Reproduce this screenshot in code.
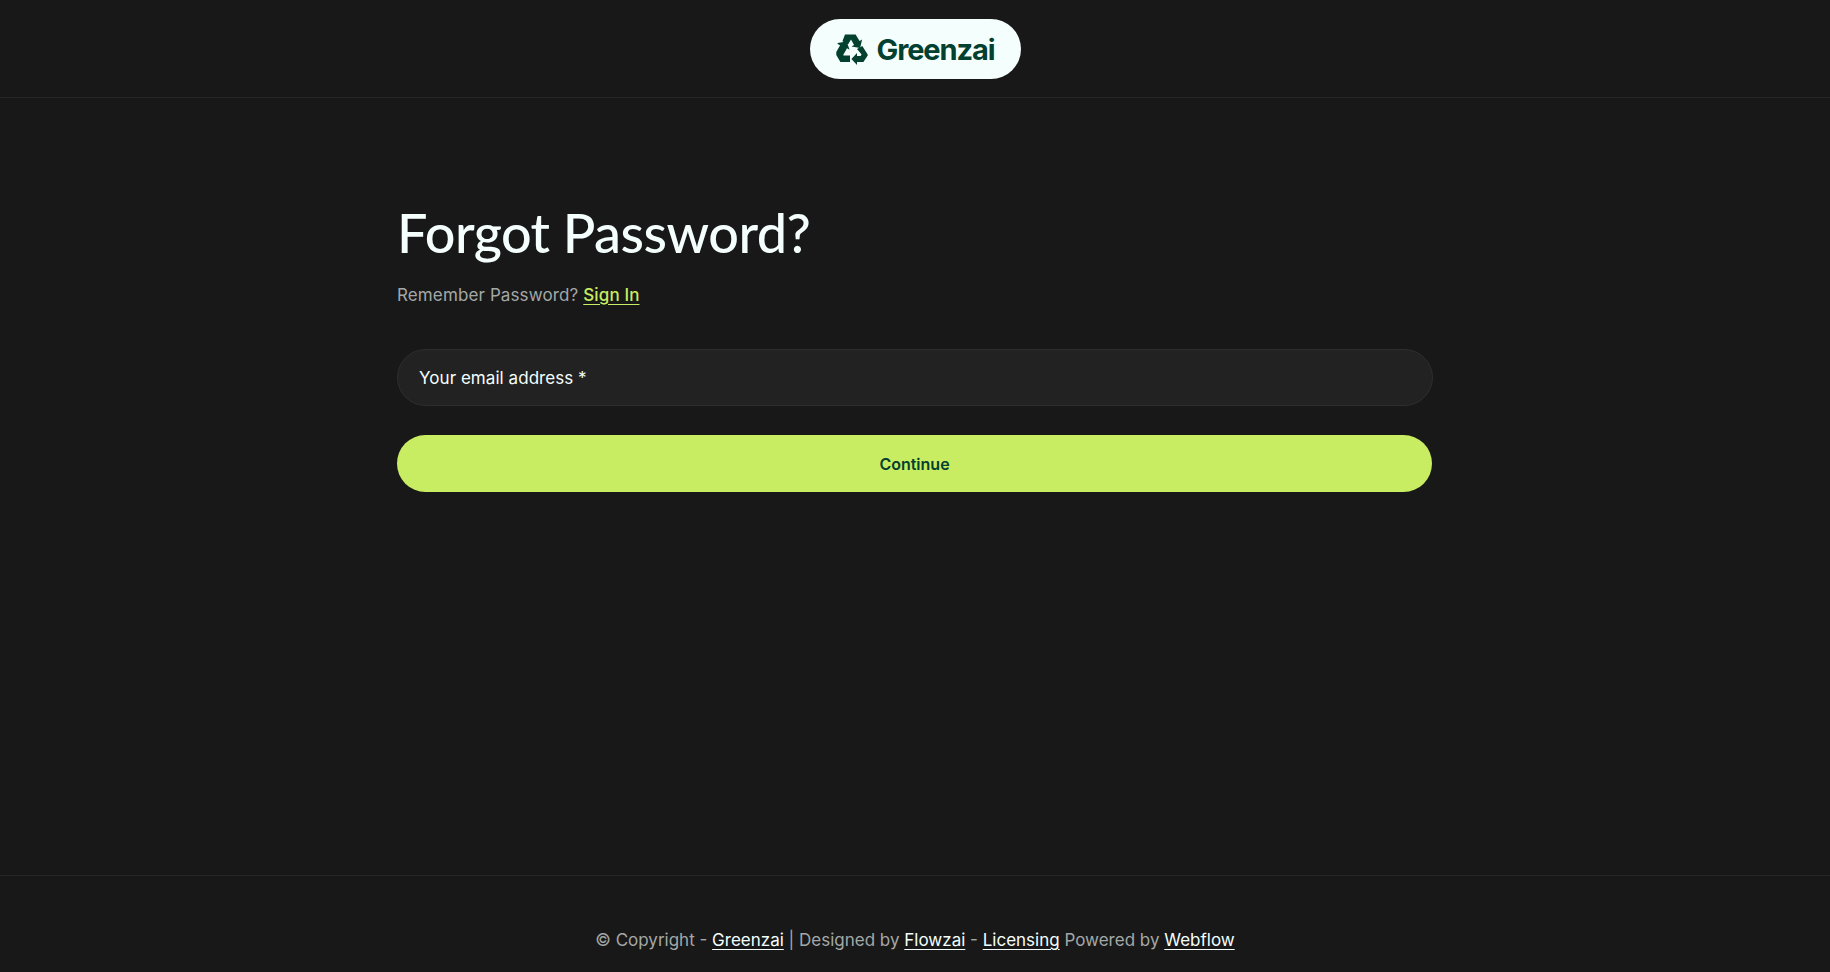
<script>
  const footerParts = ['Greenzai', 'Flowzai', 'Licensing', 'Webflow'];
</script>

<div class="page">
  <header class="top">
    <a class="logo" href="#home">
      <svg class="mark" viewBox="0 0 32 31" aria-hidden="true">
        <path d="M9 .6h10.6l4 6.4 2.5-1.5-2 8.4-8.6-1.4 2.6-1.5L15 5.6l-3 5-5.6-3.3z" />
        <path d="M1.6 9l9-1.4 3 8.2-2.6-1.5-3.8 6.6.4.6H14v6.6H4.4L.3 21v-3l3.8-6.7-2.5-1.4z" />
        <path d="M21 15l5.3-3 5.4 8.6v1L27.4 28H21v3l-5.6-6 5.6-6v3h3.6l1-1.6z" />
      </svg>
      <span>Greenzai</span>
    </a>
  </header>

  <main class="content">
    <h1>Forgot Password?</h1>
    <p class="sub">Remember Password? <a href="#signin">Sign In</a></p>
    <form class="form">
      <div class="field">Your email address *</div>
      <button type="button" class="cta">Continue</button>
    </form>
  </main>

  <footer class="bottom">
    <p>© Copyright - <a href="#a">{footerParts[0]}</a> | Designed by <a href="#b">{footerParts[1]}</a> - <a href="#c">{footerParts[2]}</a> Powered by <a href="#d">{footerParts[3]}</a></p>
  </footer>
</div>

<style>
  :global(body) {
    margin: 0;
    background: #181818;
  }
  .page {
    height: 972px;
    display: flex;
    flex-direction: column;
    background: #181818;
    font-family: "Inter", "Liberation Sans", sans-serif;
    overflow: hidden;
  }
  .top {
    height: 97px;
    border-bottom: 1px solid #262626;
    display: flex;
    justify-content: center;
    align-items: center;
  }
  .logo {
    width: 211px;
    height: 60px;
    margin-top: 1px;
    border-radius: 30px;
    background: #f4fffd;
    color: #03402f;
    display: flex;
    align-items: center;
    justify-content: center;
    gap: 9px;
    text-decoration: none;
    font-weight: 700;
    font-size: 29px;
    letter-spacing: -1.1px;
  }
  .mark {
    width: 32px;
    height: 31px;
    fill: #03402f;
  }
  .content {
    flex: 1;
    width: 1036px;
    margin: 0 auto;
    padding-top: 103px;
    box-sizing: border-box;
  }
  h1 {
    margin: 0;
    color: #f4fffd;
    font-family: "Lato", sans-serif;
    font-weight: 500;
    font-size: 54px;
    line-height: 64px;
    letter-spacing: -0.5px;
  }
  .sub {
    margin: 17px 0 0;
    color: #a3a8a7;
    font-size: 17px;
    line-height: 26px;
    letter-spacing: 0.12px;
  }
  .sub a {
    color: #c8ec62;
    font-weight: 500;
    text-underline-offset: 3px;
  }
  .form {
    margin-top: 41px;
    display: flex;
    flex-direction: column;
    gap: 29px;
  }
  .field {
    height: 57px;
    box-sizing: border-box;
    border: 1px solid #2e2e2e;
    border-radius: 29px;
    background: #222222;
    color: #f4fffd;
    padding: 0 21px;
    display: flex;
    align-items: center;
    font-size: 17px;
    letter-spacing: 0.05px;
  }
  .cta {
    height: 57px;
    width: 1035px;
    border: 0;
    border-radius: 29px;
    background: #c8ec62;
    color: #03402f;
    font-family: "Inter", sans-serif;
    font-weight: 600;
    font-size: 16px;
  }
  .bottom {
    height: 96px;
    border-top: 1px solid #262626;
    display: flex;
    justify-content: center;
    align-items: flex-start;
  }
  .bottom p {
    margin: 51px 0 0;
    color: #a3a8a7;
    font-size: 17px;
    line-height: 26px;
  }
  .bottom a {
    color: #f4fffd;
    text-underline-offset: 3px;
  }
</style>
